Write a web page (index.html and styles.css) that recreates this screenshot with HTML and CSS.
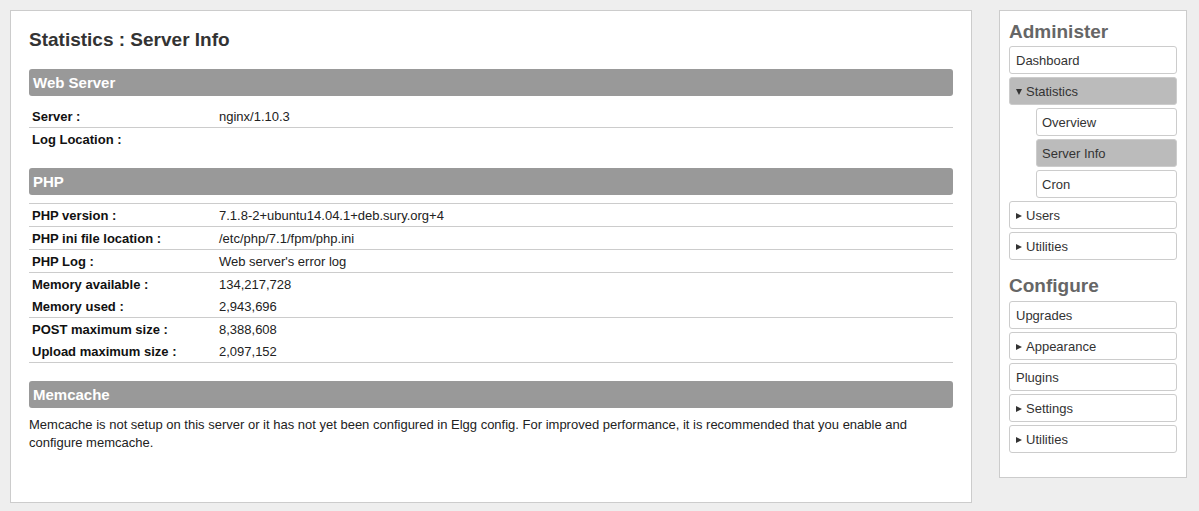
FILE: index.html
```html
<!DOCTYPE html>
<html lang="en">
<head>
<meta charset="utf-8">
<title>Statistics : Server Info</title>
<link rel="stylesheet" href="styles.css">
</head>
<body>
<div class="layout">
  <main class="main">
    <h2 class="page-title">Statistics : Server Info</h2>

    <section class="module">
      <h3 class="module-head">Web Server</h3>
      <table class="info">
        <tr class="ruled"><td class="label">Server :</td><td>nginx/1.10.3</td></tr>
        <tr><td class="label">Log Location :</td><td></td></tr>
      </table>
    </section>

    <section class="module">
      <h3 class="module-head">PHP</h3>
      <table class="info top-rule">
        <tr class="ruled"><td class="label">PHP version :</td><td>7.1.8-2+ubuntu14.04.1+deb.sury.org+4</td></tr>
        <tr class="ruled"><td class="label">PHP ini file location :</td><td>/etc/php/7.1/fpm/php.ini</td></tr>
        <tr class="ruled"><td class="label">PHP Log :</td><td>Web server's error log</td></tr>
        <tr><td class="label">Memory available :</td><td>134,217,728</td></tr>
        <tr class="ruled"><td class="label">Memory used :</td><td>2,943,696</td></tr>
        <tr><td class="label">POST maximum size :</td><td>8,388,608</td></tr>
        <tr class="ruled"><td class="label">Upload maximum size :</td><td>2,097,152</td></tr>
      </table>
    </section>

    <section class="module">
      <h3 class="module-head">Memcache</h3>
      <p class="module-text">Memcache is not setup on this server or it has not yet been configured in Elgg config. For improved performance, it is recommended that you enable and configure memcache.</p>
    </section>
  </main>

  <aside class="sidebar">
    <h2 class="side-title">Administer</h2>
    <ul class="menu">
      <li class="item">Dashboard</li>
      <li class="item selected"><span class="arrow-down"></span>Statistics</li>
      <li class="item sub">Overview</li>
      <li class="item sub selected">Server Info</li>
      <li class="item sub">Cron</li>
      <li class="item"><span class="arrow-right"></span>Users</li>
      <li class="item"><span class="arrow-right"></span>Utilities</li>
    </ul>
    <h2 class="side-title configure">Configure</h2>
    <ul class="menu">
      <li class="item">Upgrades</li>
      <li class="item"><span class="arrow-right"></span>Appearance</li>
      <li class="item">Plugins</li>
      <li class="item"><span class="arrow-right"></span>Settings</li>
      <li class="item"><span class="arrow-right"></span>Utilities</li>
    </ul>
  </aside>
</div>
</body>
</html>
```

FILE: styles.css
```css
* { box-sizing: border-box; }

body {
  margin: 0;
  background: #eeeeee;
  font-family: "Liberation Sans", Arial, sans-serif;
  font-size: 13px;
  color: #333333;
}

.layout {
  display: flex;
  align-items: flex-start;
  gap: 27px;
  padding: 10px;
}

.main {
  width: 962px;
  min-height: 493px;
  background: #ffffff;
  border: 1px solid #cccccc;
  padding: 17px 18px 30px;
}

.page-title {
  margin: 0 0 17px;
  font-size: 19px;
  line-height: 24px;
  font-weight: bold;
  color: #333333;
}

.module {
  margin-bottom: 18px;
}

.module-head {
  margin: 0 0 8px;
  height: 27px;
  line-height: 27px;
  padding: 0 4px;
  background: #999999;
  border-radius: 3px;
  color: #ffffff;
  font-size: 15px;
  font-weight: bold;
}

.info {
  width: 100%;
  border-collapse: collapse;
  border-top: 1px solid transparent;
}

.info.top-rule {
  border-top-color: #cccccc;
}

.info td {
  padding: 3px 3px 1px;
  line-height: 18px;
  vertical-align: top;
  color: #222222;
}

.info td.label {
  width: 187px;
  font-weight: bold;
  color: #111111;
}

.info tr.ruled td {
  border-bottom: 1px solid #cccccc;
}

.module-text {
  margin: 0;
  line-height: 18px;
  color: #222222;
}

.sidebar {
  width: 188px;
  background: #ffffff;
  border: 1px solid #cccccc;
  padding: 10px 9px 21px;
}

.side-title {
  margin: 0 0 3px;
  font-size: 19px;
  line-height: 22px;
  font-weight: bold;
  color: #666666;
}

.side-title.configure {
  margin-top: 15px;
  margin-bottom: 4px;
}

.menu {
  list-style: none;
  margin: 0;
  padding: 0;
}

.item {
  height: 28px;
  margin-bottom: 3px;
  padding: 5px 6px 3px;
  line-height: 18px;
  border: 1px solid #cccccc;
  border-radius: 3px;
  background: #ffffff;
  color: #333333;
}

.item.sub {
  margin-left: 27px;
  padding-left: 5px;
}

.item.selected {
  background: #bbbbbb;
}

.arrow-right,
.arrow-down {
  display: inline-block;
  width: 0;
  height: 0;
  margin-right: 4px;
  vertical-align: 1px;
}

.arrow-right {
  border-top: 3px solid transparent;
  border-bottom: 3px solid transparent;
  border-left: 6px solid #333333;
}

.arrow-down {
  border-left: 3px solid transparent;
  border-right: 3px solid transparent;
  border-top: 6px solid #333333;
}
```
